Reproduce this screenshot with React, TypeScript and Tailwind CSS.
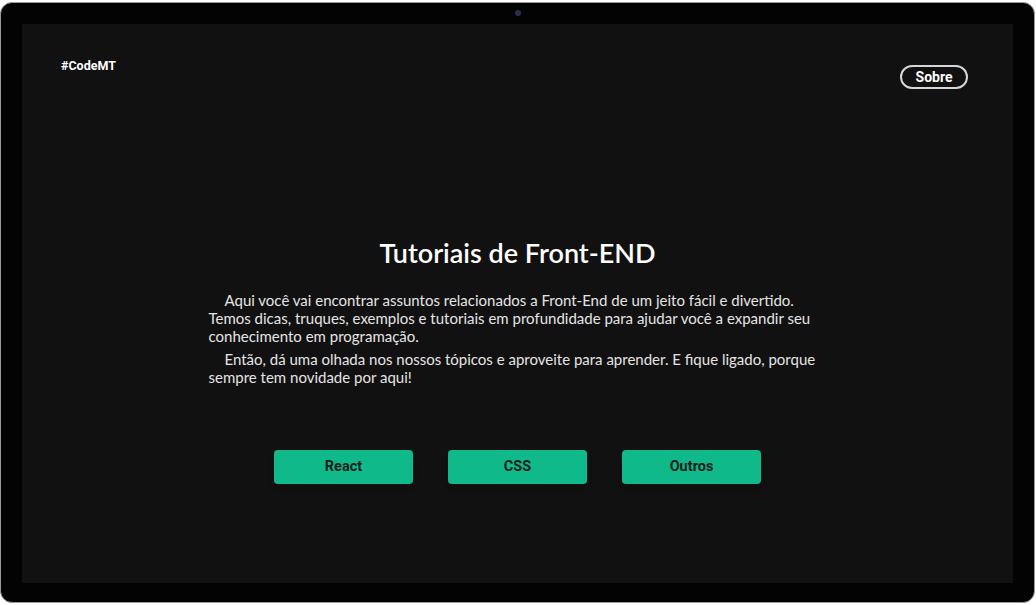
export default function App() {
  const topics = ['React', 'CSS', 'Outros'];

  return (
    <div className="w-[1036px] h-[605px] bg-white overflow-hidden">
      {/* tablet frame */}
      <div className="relative mt-[2px] w-[1035px] h-[601px] rounded-[12px] border border-[#9a9a9a] bg-[#030303] px-[21px] pt-[21px] pb-[19px]">
        <div className="absolute left-[514px] top-[7px] w-[6px] h-[6px] rounded-full bg-[#27304a]" />

        {/* screen */}
        <div className="flex flex-col w-[991px] h-[559px] bg-[#121111]">
          <header className="flex items-start justify-between pl-[39px] pr-[45px] pt-[34px] font-['Roboto',sans-serif]">
            <span className="text-[12.5px] leading-4 font-bold text-white">#CodeMT</span>
            <button className="mt-[7px] w-[68px] h-[24px] rounded-full border-2 border-[#d6d6d6] text-[14px] leading-none font-bold text-white">
              Sobre
            </button>
          </header>

          <main className="flex flex-col items-center mt-[148px] font-['Lato',sans-serif]">
            <h1 className="text-[27px] leading-8 font-semibold text-white">Tutoriais de Front-END</h1>

            <div className="w-[618px] mt-[22px] text-[15px] leading-[18px] text-[#e4e4e4] flex flex-col gap-[5px]">
              <p className="indent-4">
                Aqui você vai encontrar assuntos relacionados a Front-End de um jeito fácil e divertido.
                <br />
                Temos dicas, truques, exemplos e tutoriais em profundidade para ajudar você a expandir seu
                <br />
                conhecimento em programação.
              </p>
              <p className="indent-4">
                Então, dá uma olhada nos nossos tópicos e aproveite para aprender. E fique ligado, porque
                <br />
                sempre tem novidade por aqui!
              </p>
            </div>

            <div className="flex gap-[35px] mt-[64px] font-['Roboto',sans-serif]">
              {topics.map((t) => (
                <button
                  key={t}
                  className="w-[139px] h-[34px] rounded-[4px] bg-[#10b98a] shadow-md text-[14.5px] font-bold text-[#16201c]"
                >
                  {t}
                </button>
              ))}
            </div>
          </main>
        </div>
      </div>
    </div>
  );
}
